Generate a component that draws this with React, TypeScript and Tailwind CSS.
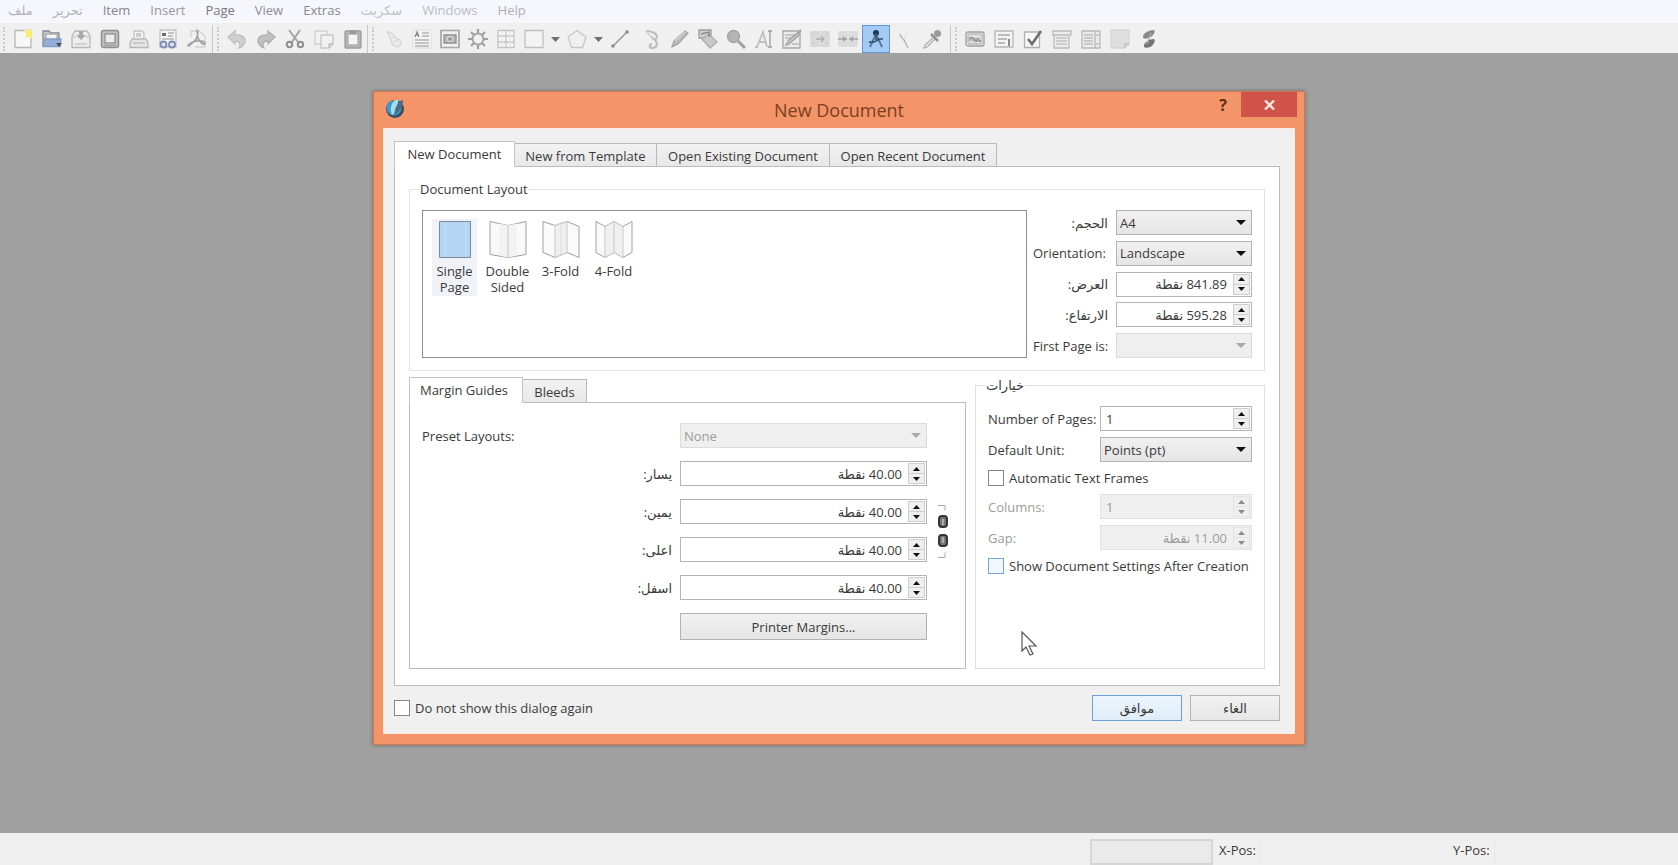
import { useId, type ReactNode } from "react";
import clsx from "clsx";

const MENU = [
  { label: "ملف", tone: "text-[#b3b3b8]" },
  { label: "تحرير", tone: "text-[#b3b3b8]" },
  { label: "Item", tone: "text-[#85858a]" },
  { label: "Insert", tone: "text-[#98989d]" },
  { label: "Page", tone: "text-[#77777c]" },
  { label: "View", tone: "text-[#8d8d92]" },
  { label: "Extras", tone: "text-[#88888d]" },
  { label: "سكربت", tone: "text-[#c0c0c4]" },
  { label: "Windows", tone: "text-[#bdbdc1]" },
  { label: "Help", tone: "text-[#b0b0b5]" },
];

function Svg({ children, size = 20 }: { children: ReactNode; size?: number }) {
  return (
    <svg width={size} height={size} viewBox="0 0 20 20" fill="none" stroke="#9a9a9a" strokeWidth="1.3" aria-hidden="true">
      {children}
    </svg>
  );
}

const ICONS: Record<string, ReactNode> = {
  New: (
    <Svg>
      <path d="M2 1.500h16v17H2z" fill="#fafafa" stroke="#a5a5a5" />
      <path d="M11 1h8v9l-3-2-4 1 1-4z" fill="#f7ea6a" stroke="none" />
      <circle cx="16" cy="5" r="2.500" fill="#ffee3e" stroke="none" />
    </Svg>
  ),
  Open: (
    <Svg>
      <path d="M1 17V2h6l2 2h8v6" fill="#b9bcc0" stroke="#66686c" />
      <path d="M4 5h11v6H4z" fill="#f4f4f4" stroke="#9a9a9a" />
      <path d="M1 17.500L3 10h16l-1 7.500z" fill="#7799d0" stroke="#5f7fb5" />
      <path d="M14 14h6l-3 4z" fill="#14172c" stroke="none" />
    </Svg>
  ),
  Save: (
    <Svg>
      <path d="M1 7l3-5h12l3 5v11.500H1z" fill="#ececec" stroke="#a5a5a5" />
      <path d="M1 8h4M15 8h4M4 15h12" stroke="#bdbdbd" />
      <path d="M8 2h4v4h3l-5 5-5-5h3z" fill="#959595" stroke="none" />
    </Svg>
  ),
  Close: (
    <Svg>
      <rect x="1.500" y="1.500" width="17" height="17" rx="2" fill="#b0b0b0" stroke="#707070" strokeWidth="1.500" />
      <rect x="5" y="5" width="10" height="9" fill="#ededed" stroke="#757575" />
      <path d="M4 16.500h12" stroke="#888" />
    </Svg>
  ),
  Print: (
    <Svg>
      <path d="M5 9V2h8l2 2v5" fill="#f6f6f6" stroke="#b3b3b3" />
      <path d="M3 10h14l2 4v4.500H1V14z" fill="#e2e2e2" stroke="#a5a5a5" />
      <path d="M4 14h12M7 5h5M7 7h5" stroke="#b0b0b0" />
    </Svg>
  ),
  Preflight: (
    <Svg>
      <path d="M2 1h16v17H2z" fill="#f7f7f7" stroke="#b5b5b5" />
      <path d="M4 4h4v3H4z" fill="#444" stroke="none" />
      <path d="M10 4h6M10 7h5M4 10h12" stroke="#a0a0a0" />
      <circle cx="5.500" cy="15.500" r="3" fill="#dbe0f0" stroke="#5a67a2" strokeWidth="1.800" />
      <circle cx="14" cy="15.500" r="3" fill="#dbe0f0" stroke="#5a67a2" strokeWidth="1.800" />
    </Svg>
  ),
  "Export PDF": (
    <Svg>
      <path d="M4 8V2h8l6 5v11H8" fill="#f1f1f1" stroke="#c8c8c8" />
      <path d="M10 1c3 4-2 12-8 16-3 1 0-4 8-5 5-1 9 1 8 3s-8-2-8-14z" fill="#b3b3b3" stroke="#858585" />
    </Svg>
  ),
  Undo: (
    <Svg>
      <path d="M1 8l7-6v4c7-1 11 3 10 7-1 3-3 5-6 6 2-4 1-7-4-7v3z" fill="#c6c6c6" stroke="#b0b0b0" />
    </Svg>
  ),
  Redo: (
    <Svg>
      <path d="M19 8l-7-6v4C5 5 1 9 2 13c1 3 3 5 6 6-2-4-1-7 4-7v3z" fill="#b0b0b0" stroke="#9d9d9d" />
    </Svg>
  ),
  Cut: (
    <Svg>
      <path d="M4 1l9 12M15 1L7 13" stroke="#8d8d8d" strokeWidth="2" />
      <circle cx="4.500" cy="15.500" r="2.700" stroke="#707070" strokeWidth="2" />
      <circle cx="15.500" cy="15.500" r="2.700" stroke="#707070" strokeWidth="2" />
    </Svg>
  ),
  Copy: (
    <Svg>
      <path d="M1 2h12v13H1z" fill="#f3f3f3" stroke="#c5c5c5" />
      <path d="M7 6h12v9l-4 4H7z" fill="#f3f3f3" stroke="#bbb" />
      <path d="M15 19v-4h4" stroke="#aaa" />
    </Svg>
  ),
  Paste: (
    <Svg>
      <rect x="2" y="2" width="16" height="17" rx="1" fill="#a0a0a0" stroke="#808080" />
      <path d="M5 5h10v11H5z" fill="#f6f6f6" stroke="#9a9a9a" />
      <path d="M7 1h6v4H7z" fill="#808080" stroke="none" />
    </Svg>
  ),
  Select: (
    <Svg>
      <path d="M3 3l5 1 3 4 5 3 1 5-4 2-5-3-1-4z" fill="#ebebeb" stroke="#cecece" />
      <path d="M7 10l4-3M9 14l5-4" stroke="#d2d2d2" />
    </Svg>
  ),
  "Text Frame": (
    <Svg>
      <path d="M1 1h18v18H1z" fill="#f6f6f6" stroke="#e0e0e0" />
      <path d="M3 8l2-5 2 5M4 6h3" stroke="#666" />
      <path d="M10 4h7M10 7h7M3 11h14M3 14h14M3 17h14" stroke="#a0a0a0" />
    </Svg>
  ),
  "Image Frame": (
    <Svg>
      <path d="M1 1.500h18v17H1z" fill="#efefef" stroke="#8f8f8f" strokeWidth="1.700" />
      <path d="M4 6h12v8H4z" fill="#a5a5a5" stroke="#707070" />
      <circle cx="10" cy="10" r="2.500" fill="#707070" stroke="#ccc" />
    </Svg>
  ),
  "Render Frame": (
    <Svg>
      <circle cx="10" cy="10" r="5.500" fill="#f3f3f3" stroke="#8e8e8e" strokeWidth="2" />
      <path d="M10 0v4M10 16v4M0 10h4M16 10h4M3 3l3 3M14 14l3 3M17 3l-3 3M3 17l3-3" stroke="#858585" strokeWidth="2.200" />
    </Svg>
  ),
  Table: (
    <Svg>
      <path d="M2 1.500h16v17H2zM10 2v16M2 7h16M2 13h16" fill="#fafafa" stroke="#b5b5b5" />
      <path d="M6 2v16M14 2v16" stroke="#dedede" />
    </Svg>
  ),
  Shape: (
    <Svg>
      <path d="M1 1.500h18v17H1z" fill="#f5f5f5" stroke="#b0b0b0" />
    </Svg>
  ),
  Polygon: (
    <Svg>
      <path d="M10 1.500l9 6.500-3.500 10.500h-11L1 8z" fill="#f1f1f1" stroke="#bababa" />
    </Svg>
  ),
  Line: (
    <Svg>
      <path d="M3 17L17 3" stroke="#777" strokeWidth="1.500" />
      <path d="M1.500 15.500h3v3h-3zM15.500 1.500h3v3h-3z" fill="#666" stroke="none" />
    </Svg>
  ),
  Bezier: (
    <Svg>
      <path d="M4 2c5 0 11 2 11 6-1 4-6 2-5-1M12 10c5 4 3 9-2 9-3 0-3-4 0-4" stroke="#adadad" strokeWidth="2.200" />
      <path d="M4 2l7 8" stroke="#c5c5c5" />
    </Svg>
  ),
  Freehand: (
    <Svg>
      <path d="M2 18l2-6L15 2l3 2L8 15z" fill="#a8a8a8" stroke="#8c8c8c" />
      <path d="M5 12l10-9" stroke="#ccc" />
    </Svg>
  ),
  Rotate: (
    <Svg>
      <path d="M1 1h12v8H1z" fill="#c5c5c5" stroke="#808080" />
      <path d="M11 5l8 8-7 6-8-9z" fill="#bebebe" stroke="#989898" />
      <path d="M3 5l8-2v5" stroke="#666" />
    </Svg>
  ),
  Zoom: (
    <Svg>
      <circle cx="7.500" cy="7.500" r="6" fill="#a0a0a0" stroke="#8b8b8b" />
      <path d="M12 12l7 7" stroke="#858585" strokeWidth="3" />
    </Svg>
  ),
  "Edit Contents": (
    <Svg>
      <path d="M1 18h3M3 18L9 3l4 15M5 13h6" stroke="#aeaeae" strokeWidth="1.800" />
      <path d="M14 2h4M16 2v16M14 18h4" stroke="#808080" />
    </Svg>
  ),
  "Story Editor": (
    <Svg>
      <path d="M1 2h17v17H1z" fill="#e7e7e7" stroke="#8f8f8f" />
      <path d="M3 6h10M3 9h7M10 15h7" stroke="#a9a9a9" />
      <path d="M4 16l3-5L19 1l-3 6-9 8z" fill="#bbb" stroke="#888" />
    </Svg>
  ),
  "Link Frames": (
    <Svg>
      <path d="M1 3h8v14H1zM11 3h8v14h-8z" fill="#d4d4d4" stroke="#cbcbcb" />
      <path d="M6 10h8M11 7l3 3-3 3" stroke="#999" />
      <path d="M2 6h3M2 14h3M15 6h3M15 14h3" stroke="#c2c2c2" />
    </Svg>
  ),
  "Unlink Frames": (
    <Svg>
      <path d="M1 3h8v14H1zM11 3h8v14h-8z" fill="#d6d6d6" stroke="#d0d0d0" />
      <path d="M0 10h9M11 10h9" stroke="#8d8d8d" />
      <path d="M5 7l3 3-3 3zM15 7l-3 3 3 3z" fill="#808080" stroke="none" />
    </Svg>
  ),
  Measure: (
    <Svg>
      <circle cx="10" cy="4" r="3" fill="#1d3550" stroke="none" />
      <path d="M10 5L4 18M10 5l6 13" stroke="#58748f" strokeWidth="1.800" />
      <path d="M3 13c5 1 8-1 10-3h4M10 4v7" stroke="#2f4a67" strokeWidth="1.500" />
    </Svg>
  ),
  "Copy Properties": (
    <Svg>
      <path d="M6 5c1 4 3 5 4 6l4 8" stroke="#a9a9a9" strokeWidth="1.600" />
      <path d="M13 3l-2 7" stroke="#dedede" />
    </Svg>
  ),
  "Eye Dropper": (
    <Svg>
      <path d="M12 8l-9 8-1 3 3-1 8-8" fill="#ececec" stroke="#9a9a9a" />
      <path d="M9 5l7 7" stroke="#737373" strokeWidth="2.500" />
      <circle cx="15.500" cy="4.500" r="3.500" fill="#7f7f7f" stroke="none" />
    </Svg>
  ),
  "PDF Push Button": (
    <Svg>
      <rect x="1" y="3" width="18" height="14" rx="2" fill="#ececec" stroke="#858585" />
      <rect x="3" y="5" width="14" height="10" rx="1" fill="#d9d9d9" stroke="#aaa" />
      <path d="M5 12V9h3v3M10 9v3h2V9M14 9v3h2" stroke="#666" />
    </Svg>
  ),
  "PDF Text Field": (
    <Svg>
      <path d="M1 2h18v16H1z" fill="#f5f5f5" stroke="#a3a3a3" />
      <path d="M4 6h12M4 10h9M4 14h7" stroke="#909090" />
      <path d="M15 10v7" stroke="#666" strokeWidth="2" />
    </Svg>
  ),
  "PDF Check Box": (
    <Svg>
      <path d="M1.500 3h15v15.500h-15z" fill="#f8f8f8" stroke="#9c9c9c" />
      <path d="M5 10l4 5 9-13" stroke="#444" strokeWidth="2.600" />
    </Svg>
  ),
  "PDF Combo Box": (
    <Svg>
      <path d="M1 2h18v4H1zM2 6h15v13H2z" fill="#ebebeb" stroke="#a9a9a9" />
      <path d="M4 9h11M4 12h11M4 15h11" stroke="#b3b3b3" />
    </Svg>
  ),
  "PDF List Box": (
    <Svg>
      <path d="M1 2h18v17H1zM14 2v17" fill="#e8e8e8" stroke="#a5a5a5" />
      <path d="M3 6h9M3 9h9M3 12h9M3 15h9M15 6h3M15 15h3" stroke="#acacac" />
    </Svg>
  ),
  "Text Annotation": (
    <Svg>
      <path d="M1 1h18v14l-4 4H1z" fill="#d9d9d9" stroke="#cbcbcb" />
      <path d="M15 19v-4h4" stroke="#b0b0b0" />
    </Svg>
  ),
  "Link Annotation": (
    <Svg>
      <path d="M4 8c0-4 6-7 11-7 2 2-1 7-6 8-2 1-5 1-5-1z" fill="#666" stroke="none" />
      <path d="M5 18c-1-4 5-8 10-8 2 2-1 7-4 8-2 1-5 1-6 0z" fill="#4c4c4c" stroke="none" />
      <path d="M12 4l-4 11" stroke="#999" />
    </Svg>
  ),
};

function Tool({ name, active }: { name: string; active?: boolean }) {
  return (
    <button
      type="button"
      title={name}
      aria-label={name}
      className={clsx(
        "flex h-7 w-7 shrink-0 items-center justify-center border",
        active ? "border-[#5d95d6] bg-[#a3cbf3]" : "border-transparent opacity-75"
      )}
    >
      {ICONS[name]}
    </button>
  );
}

function ToolMenu({ name }: { name: string }) {
  return (
    <button type="button" aria-label={name} className="flex h-7 w-[15px] shrink-0 items-center justify-center">
      <svg width="9" height="5" viewBox="0 0 9 5" aria-hidden="true">
        <path d="M0 0h9L4.500 5z" fill="#6f6f6f" />
      </svg>
    </button>
  );
}

function Separator() {
  return <span className="mr-1 h-7 w-px shrink-0 bg-[#c8c8c8]" />;
}

function Grip() {
  return <span className="mr-1 h-6 shrink-0 border-l-2 border-dotted border-[#cbcbcb]" />;
}

function Toolbar() {
  return (
    <div role="toolbar" className="flex h-8 items-center overflow-hidden border-t-2 border-[#f8f8f8] bg-[#f0f0f0] pt-0.5 pl-[3px]">
      <Grip />
      <div className="flex gap-px pr-px">
        {["New", "Open", "Save", "Close", "Print", "Preflight", "Export PDF"].map((n) => (
          <Tool key={n} name={n} />
        ))}
      </div>
      <Separator />
      <Grip />
      <div className="flex gap-px">
        {["Undo", "Redo", "Cut", "Copy", "Paste"].map((n) => (
          <Tool key={n} name={n} />
        ))}
      </div>
      <Separator />
      <Grip />
      <div className="flex pl-0.5">
        {["Select", "Text Frame", "Image Frame", "Render Frame", "Table", "Shape"].map((n) => (
          <Tool key={n} name={n} />
        ))}
        <ToolMenu name="More shapes" />
        <Tool name="Polygon" />
        <ToolMenu name="Polygon options" />
        <Tool name="Line" />
      </div>
      <div className="flex px-1">
        {["Bezier", "Freehand", "Rotate", "Zoom", "Edit Contents", "Story Editor", "Link Frames", "Unlink Frames", "Measure", "Copy Properties", "Eye Dropper"].map((n) => (
          <Tool key={n} name={n} active={n === "Measure"} />
        ))}
      </div>
      <Separator />
      <Grip />
      <div className="flex gap-px">
        {["PDF Push Button", "PDF Text Field", "PDF Check Box", "PDF Combo Box", "PDF List Box", "Text Annotation", "Link Annotation"].map((n) => (
          <Tool key={n} name={n} />
        ))}
      </div>
    </div>
  );
}

interface FieldProps {
  id: string;
  value: string;
  disabled?: boolean;
}

function Select({ id, value, disabled }: FieldProps) {
  return (
    <div className="relative">
      <select
        id={id}
        disabled={disabled}
        defaultValue={value}
        className={clsx(
          "block h-[25px] w-full appearance-none border px-[3px] leading-5",
          disabled
            ? "border-[#dcdcdc] bg-[#efefef] text-[#9c9c9c] opacity-100"
            : "border-[#b2b2b2] bg-linear-to-b from-[#f1f1f1] to-[#e5e5e5]"
        )}
      >
        <option>{value}</option>
      </select>
      <svg className="pointer-events-none absolute top-[10px] right-[6px]" width="10" height="5" viewBox="0 0 10 5" aria-hidden="true">
        <path d="M0 0h10L5 5z" fill={disabled ? "#a8a8a8" : "#111"} />
      </svg>
    </div>
  );
}

function Spin({ id, value, disabled, rtl = true }: FieldProps & { rtl?: boolean }) {
  const arrow = disabled ? "#8c8c8c" : "#111";
  return (
    <div
      className={clsx(
        "flex h-[25px] border",
        disabled ? "border-[#e2e2e2] bg-[#efefef] text-[#9c9c9c]" : "border-[#b4b4b4] bg-white"
      )}
    >
      <input
        id={id}
        type="text"
        dir={rtl ? "rtl" : "ltr"}
        disabled={disabled}
        defaultValue={value}
        className="min-w-0 flex-1 px-[5px] outline-none"
      />
      <div className={clsx("m-px flex w-[17px] flex-col border", disabled ? "border-[#e4e4e4]" : "border-[#cfcfcf] bg-[#efefef]")}>
        <button type="button" disabled={disabled} aria-label="Increase" className="flex flex-1 items-center justify-center">
          <svg width="7" height="4" viewBox="0 0 7 4"><path d="M0 4h7L3.500 0z" fill={arrow} /></svg>
        </button>
        <button type="button" disabled={disabled} aria-label="Decrease" className={clsx("flex flex-1 items-center justify-center border-t", disabled ? "border-[#e4e4e4]" : "border-[#cfcfcf]")}>
          <svg width="7" height="4" viewBox="0 0 7 4"><path d="M0 0h7L3.500 4z" fill={arrow} /></svg>
        </button>
      </div>
    </div>
  );
}

function Check({ label, hot }: { label: string; hot?: boolean }) {
  const id = useId();
  return (
    <div className="flex h-4 items-center gap-[5px]">
      <input
        id={id}
        type="checkbox"
        className={clsx("size-4 shrink-0 appearance-none border", hot ? "border-[#79a5d2] bg-[#f0f7fe]" : "border-[#858585] bg-white")}
      />
      <label htmlFor={id} className="whitespace-nowrap">{label}</label>
    </div>
  );
}

function Tab({ label, active, className }: { label: string; active?: boolean; className: string }) {
  return (
    <button
      type="button"
      role="tab"
      aria-selected={!!active}
      className={clsx(
        "relative shrink-0 border whitespace-nowrap",
        active
          ? "z-10 -mb-px h-[26px] border-[#c4c4c4] border-b-white bg-white"
          : "-ml-px h-[23px] border-[#b9b9b9] border-b-0 bg-linear-to-b from-[#f2f2f2] to-[#e8e8e8] pt-px",
        className
      )}
    >
      {label}
    </button>
  );
}

const LAYOUTS = ["Single Page", "Double Sided", "3-Fold", "4-Fold"];

const PAGE_ICONS = [
  <>
    <path d="M4.500 1.500h31v36h-31z" fill="#b3d4f2" stroke="#7c8b9c" />
    <path d="M10.500 2v35M30.500 2v35" stroke="#c6dff5" />
  </>,
  <>
    <path d="M2 1.500l18 4 18-4v33l-18 3-18-3z" fill="#fafafa" />
    <path d="M20 5.500l9-2v32l-9 2-9-2v-32z" fill="#f3f3f3" stroke="none" />
    <path d="M20 5.500v32" stroke="#c4c4c4" />
  </>,
  <>
    <path d="M2 1.500l12 4 12-4 12 5v31l-12-5-12 5-12-5z" fill="#fafafa" />
    <path d="M14 5.500l12-4v31l-12 5z" fill="#efefef" stroke="#c9c9c9" />
    <path d="M20 4v31" stroke="#dedede" />
  </>,
  <>
    <path d="M2 1.500l9 5 9-5 9 5 9-5v31l-9 5-9-5-9 5-9-5z" fill="#fafafa" />
    <path d="M11 6.500l9-5 9 5v31l-9-5-9 5z" fill="#f0f0f0" stroke="#c9c9c9" />
    <path d="M20 2v31" stroke="#c9c9c9" />
  </>,
];

function DocumentLayout() {
  return (
    <fieldset className="border border-[#e3e3e3] px-3 pt-[13px] pb-3">
      <legend className="-ml-[3px] px-px leading-4">Document Layout</legend>
      <div className="flex gap-[6px]">
        <div role="listbox" aria-label="Document Layout" className="flex h-[148px] flex-1 items-start gap-[8px] border border-[#8e8e8e] bg-white px-[9px] pt-2">
          {LAYOUTS.map((label, i) => (
            <button
              key={label}
              type="button"
              role="option"
              aria-selected={i === 0}
              className={clsx("flex w-[45px] flex-col items-center py-px leading-4", i === 0 && "bg-[#f1f2f8]")}
            >
              <svg width="40" height="39" viewBox="0 0 40 39" fill="none" stroke="#a0a0a0" aria-hidden="true">
                {PAGE_ICONS[i]}
              </svg>
              <span className="mt-1">{label}</span>
            </button>
          ))}
        </div>
        <div className="grid grid-cols-[75px_136px] content-between items-center gap-x-2">
          <label htmlFor="size" dir="rtl">الحجم:</label>
          <Select id="size" value="A4" />
          <label htmlFor="orientation">Orientation:</label>
          <Select id="orientation" value="Landscape" />
          <label htmlFor="width" dir="rtl">العرض:</label>
          <Spin id="width" value="841.89 نقطة" />
          <label htmlFor="height" dir="rtl">الارتفاع:</label>
          <Spin id="height" value="595.28 نقطة" />
          <label htmlFor="first" className="whitespace-nowrap">First Page is:</label>
          <Select id="first" value="" disabled />
        </div>
      </div>
    </fieldset>
  );
}

const MARGINS = [
  { id: "left", label: "يسار:" },
  { id: "right", label: "يمين:" },
  { id: "top", label: "اعلى:" },
  { id: "bottom", label: "اسفل:" },
];

function MarginGuides() {
  return (
    <div className="flex min-w-0 flex-1 flex-col">
      <div role="tablist" className="flex items-end">
        <Tab label="Margin Guides" active className="w-[114px] pr-1" />
        <Tab label="Bleeds" className="w-[65px]" />
      </div>
      <div className="flex flex-1 items-start border border-[#bdbdbd] bg-white pt-5 pr-4 pb-7 pl-3">
        <div className="grid flex-1 grid-cols-[1fr_247px] items-center gap-x-2 gap-y-[13px]">
          <label htmlFor="preset">Preset Layouts:</label>
          <Select id="preset" value="None" disabled />
          {MARGINS.map((m) => (
            <div key={m.id} className="contents">
              <label htmlFor={m.id} dir="rtl">{m.label}</label>
              <Spin id={m.id} value="40.00 نقطة" />
            </div>
          ))}
          <button type="button" className="col-start-2 h-[27px] border border-[#b2b2b2] bg-linear-to-b from-[#f1f1f1] to-[#e5e5e5]">
            Printer Margins...
          </button>
        </div>
        <button type="button" aria-label="Link margins" className="ml-[10px] self-center">
          <svg width="12" height="56" viewBox="0 0 12 56" fill="none" aria-hidden="true">
            <path d="M1 1.500h7v5M1 53.500h7v-5" stroke="#aaa" />
            <rect x="2" y="12" width="8" height="11" rx="3" fill="#777" stroke="#333" strokeWidth="2" />
            <rect x="2" y="31" width="8" height="11" rx="3" fill="#777" stroke="#333" strokeWidth="2" />
            <path d="M6 15v6M6 33v6" stroke="#ddd" />
          </svg>
        </button>
      </div>
    </div>
  );
}

function Options() {
  return (
    <fieldset className="relative w-[290px] min-w-0 shrink-0 border border-[#e0e0e0] px-3 pt-[13px]">
      <legend className="-ml-[3px] px-px leading-4" dir="rtl">خيارات</legend>
      <div className="grid grid-cols-[104px_minmax(0,1fr)] items-center gap-x-2 gap-y-[6px]">
        <label htmlFor="pages" className="whitespace-nowrap">Number of Pages:</label>
        <Spin id="pages" value="1" rtl={false} />
        <label htmlFor="unit">Default Unit:</label>
        <Select id="unit" value="Points (pt)" />
      </div>
      <div className="py-2">
        <Check label="Automatic Text Frames" />
      </div>
      <div className="grid grid-cols-[104px_minmax(0,1fr)] items-center gap-x-2 gap-y-[6px]">
        <label htmlFor="columns" className="text-[#9c9c9c]">Columns:</label>
        <Spin id="columns" value="1" rtl={false} disabled />
        <label htmlFor="gap" className="text-[#9c9c9c]">Gap:</label>
        <Spin id="gap" value="11.00 نقطة" disabled />
      </div>
      <div className="py-2">
        <Check label="Show Document Settings After Creation" hot />
      </div>
      <svg className="pointer-events-none absolute top-[238px] left-[45px]" width="17" height="25" viewBox="0 0 17 25" aria-hidden="true">
        <path d="M1 1v19l4-4 4 8 3-1-4-8h7z" fill="#fff" stroke="#555" strokeWidth="1.200" />
      </svg>
    </fieldset>
  );
}

function NewDocumentDialog() {
  return (
    <div role="dialog" aria-label="New Document" className="w-full max-w-[932px] border border-[#cf7a55] bg-[#f39469] px-[9px] pb-[10px] shadow-[0_0_4px_rgba(0,0,0,0.35)]">
      <div className="relative flex h-9 items-center justify-center">
        <svg className="absolute top-[6px] left-[2px]" width="20" height="21" viewBox="0 0 20 21" aria-hidden="true">
          <circle cx="10" cy="11" r="9" fill="#3b4c5c" />
          <circle cx="9" cy="10" r="7.500" fill="#3b9ccc" />
          <path d="M10 2C5 6 5 13 7 17c5-2 6-9 6-15z" fill="#a5dcf0" />
          <path d="M18 2c-5 1-8 7-9 15 6-3 9-9 9-15z" fill="#4b6f88" />
        </svg>
        <h1 className="text-[18px] text-[#7c3f1e]">New Document</h1>
        <div className="absolute top-0 -right-0.5 flex">
          <button type="button" aria-label="Help" className="h-[25px] w-9 text-[16px] font-bold text-[#5c3010]">?</button>
          <button type="button" aria-label="Close" className="flex h-[25px] w-14 items-center justify-center bg-[#cf5349]">
            <svg width="11" height="10" viewBox="0 0 11 10" aria-hidden="true">
              <path d="M1 0.500l9 9M10 0.500l-9 9" stroke="#fbe5de" strokeWidth="2.400" />
            </svg>
          </button>
        </div>
      </div>
      <div className="border border-[#fbe9e0] bg-[#f0f0f0] pt-3 pr-[14px] pb-3 pl-[10px]">
        <div role="tablist" className="flex items-end">
          <Tab label="New Document" active className="w-[121px]" />
          <Tab label="New from Template" className="w-[143px]" />
          <Tab label="Open Existing Document" className="w-[174px]" />
          <Tab label="Open Recent Document" className="w-[168px]" />
        </div>
        <div className="border border-[#bcbcbc] bg-white px-[14px] pt-[14px] pb-4">
          <DocumentLayout />
          <div className="mt-[6px] flex gap-[9px]">
            <MarginGuides />
            <Options />
          </div>
        </div>
        <div className="mt-[9px] flex items-center justify-between">
          <Check label="Do not show this dialog again" />
          <div className="flex gap-2">
            <button type="button" className="h-[26px] w-[90px] border border-[#6f9fd3] bg-linear-to-b from-[#edf5fc] to-[#e0edf8]">موافق</button>
            <button type="button" className="h-[26px] w-[90px] border border-[#b4b4b4] bg-linear-to-b from-[#f1f1f1] to-[#e7e7e7]">الغاء</button>
          </div>
        </div>
      </div>
    </div>
  );
}

export default function App() {
  return (
    <div className="flex min-h-screen flex-col bg-[#a0a0a0] font-['Open_Sans','DejaVu_Sans',sans-serif] text-[13px] leading-5 text-[#3a3a3a]">
      <nav className="flex h-[21px] items-center gap-5 bg-[#f6f6fd] pb-0.5 pl-2">
        {MENU.map((m) => (
          <button key={m.label} type="button" className={clsx("leading-5", m.tone)}>
            {m.label}
          </button>
        ))}
      </nav>
      <Toolbar />
      <main className="flex flex-1 items-start justify-center pt-[38px]">
        <NewDocumentDialog />
      </main>
      <footer className="flex h-8 items-end justify-end bg-[#f0f0f0] pt-[6px]">
        <div className="mr-[6px] h-full w-[123px] border-2 border-[#d6d6d6] bg-[#eaeaea]" />
        <div className="flex h-full w-[234px] items-center">
          <span className="border-r border-[#e6e6e6] pr-1 pb-1">X-Pos:</span>
        </div>
        <div className="flex h-full w-[225px] items-center">
          <span className="border-r border-[#e6e6e6] pr-1 pb-1">Y-Pos:</span>
        </div>
      </footer>
    </div>
  );
}
